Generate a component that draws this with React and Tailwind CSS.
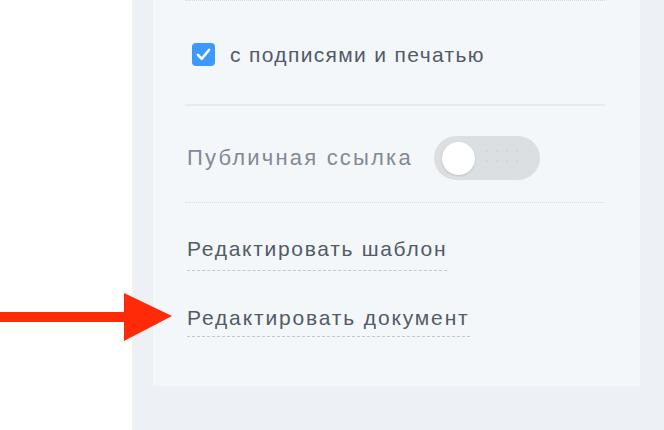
import React from "react";

export default function App() {
  return (
    <div
      className="relative flex h-[430px] w-[664px] overflow-hidden bg-white"
      style={{ fontFamily: '"Liberation Sans", Arial, sans-serif' }}
    >
      <div className="w-[132px] shrink-0 bg-white" />
      <div className="flex-1 bg-[#edf1f5] pl-[21px] pr-[24px]">
        <div className="h-[386px] bg-[#f4f7fa] pl-[32px] pr-[35px]">
          <div className="border-t border-dotted border-[#d5d9de]" />
          <div className="flex h-[103px] items-center gap-[15px] pl-[7px] pt-[4px]">
            <div className="flex h-[23px] w-[23px] items-center justify-center rounded-[4px] bg-[#3d9afc]">
              <svg width="15" height="13" viewBox="0 0 15 13" fill="none">
                <path d="M2 7 L5.8 10.8 L13 2" stroke="white" strokeWidth="2.6" strokeLinecap="round" strokeLinejoin="round" />
              </svg>
            </div>
            <span className="text-[21px] leading-[24px] tracking-[1.35px] text-[#535b67]">с подписями и печатью</span>
          </div>
          <div className="h-[2px] bg-[#e6eaee]" />
          <div className="flex h-[96px] items-center gap-[21px] pl-[2px] pt-[8px]">
            <span className="text-[22px] leading-[24px] tracking-[2.2px] text-[#828a94]">Публичная ссылка</span>
            <div className="relative flex h-[44px] w-[106px] items-center rounded-full bg-[#dcdfe2] pl-[8px]">
              <div className="h-[33px] w-[33px] rounded-full bg-white shadow-[0_1px_2px_rgba(0,0,0,0.15)]" />
              <div className="absolute left-[48px] top-[10px] h-[24px] w-[44px] bg-[radial-gradient(circle,#c6cacf_0.6px,transparent_0.9px)] bg-[length:10px_10px] opacity-70" />
            </div>
          </div>
          <div className="border-t border-dotted border-[#d5d9de]" />
          <div className="flex flex-col items-start pl-[2px] pt-[34px]">
            <span className="border-b border-dashed border-[#c3c8ce] pb-[9px] text-[21px] leading-[24px] tracking-[1.7px] text-[#525b67]">
              Редактировать шаблон
            </span>
            <span className="mt-[35px] border-b border-dashed border-[#c3c8ce] pb-[6px] text-[21px] leading-[24px] tracking-[1.85px] text-[#525b67]">
              Редактировать документ
            </span>
          </div>
        </div>
      </div>
      <svg className="absolute left-0 top-[292px]" width="174" height="50" viewBox="0 0 174 50">
        <rect x="0" y="20" width="128" height="10" fill="#ff2a08" />
        <polygon points="124,1 172,24 124,49" fill="#ff2a08" />
      </svg>
    </div>
  );
}
